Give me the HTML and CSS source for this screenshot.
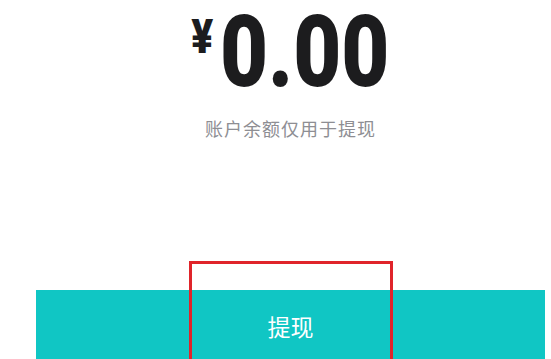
FILE: index.html
```html
<!DOCTYPE html>
<html lang="zh-CN">
<head>
    <meta charset="UTF-8">
    <meta name="viewport" content="width=device-width, initial-scale=1.0">
    <title>零钱</title>
    <link rel="stylesheet" href="styles.css">
</head>
<body>
    <div class="wallet">
        <div class="balance">
            <div class="amount-row">
                <span class="currency">¥</span>
                <span class="amount">0.00</span>
            </div>
        </div>
        <p class="tip">账户余额仅用于提现</p>
        <a href="#" class="withdraw-btn">提现</a>
        <div class="highlight"></div>
    </div>
</body>
</html>
```

FILE: styles.css
```css
body {
    margin: 0;
    padding: 0;
    background-color: #fff;
    font-family: Roboto, "Noto Sans CJK SC", sans-serif;
    overflow: hidden;
    height: 359px;
}

.wallet {
    position: relative;
    margin: 0 6px 0 36px;
    text-align: center;
}

.balance {
    display: flex;
    justify-content: center;
    padding-top: 2px;
}
.amount-row {
    display: flex;
    align-items: flex-start;
    transform: scaleX(0.83);
    color: #1c1c1e;
    font-weight: 900;
}
.currency {
    font-size: 49px;
    line-height: 1;
    margin-top: 10px;
    margin-right: 8px;
}
.amount {
    font-size: 100px;
    line-height: 1;
}

.tip {
    margin: 13px 0 0;
    font-family: "Noto Sans CJK SC", sans-serif;
    font-size: 18px;
    line-height: 26px;
    letter-spacing: 1px;
    color: #8e8e93;
}

.withdraw-btn {
    display: block;
    margin-top: 149px;
    height: 74px;
    line-height: 72px;
    background-color: #10c6c4;
    color: #fff;
    font-family: "Noto Sans CJK SC", sans-serif;
    font-size: 23px;
    text-decoration: none;
}

.highlight {
    position: absolute;
    left: 153px;
    top: 261px;
    width: 204px;
    height: 130px;
    border: 3px solid #e0242a;
    box-sizing: border-box;
}
```
